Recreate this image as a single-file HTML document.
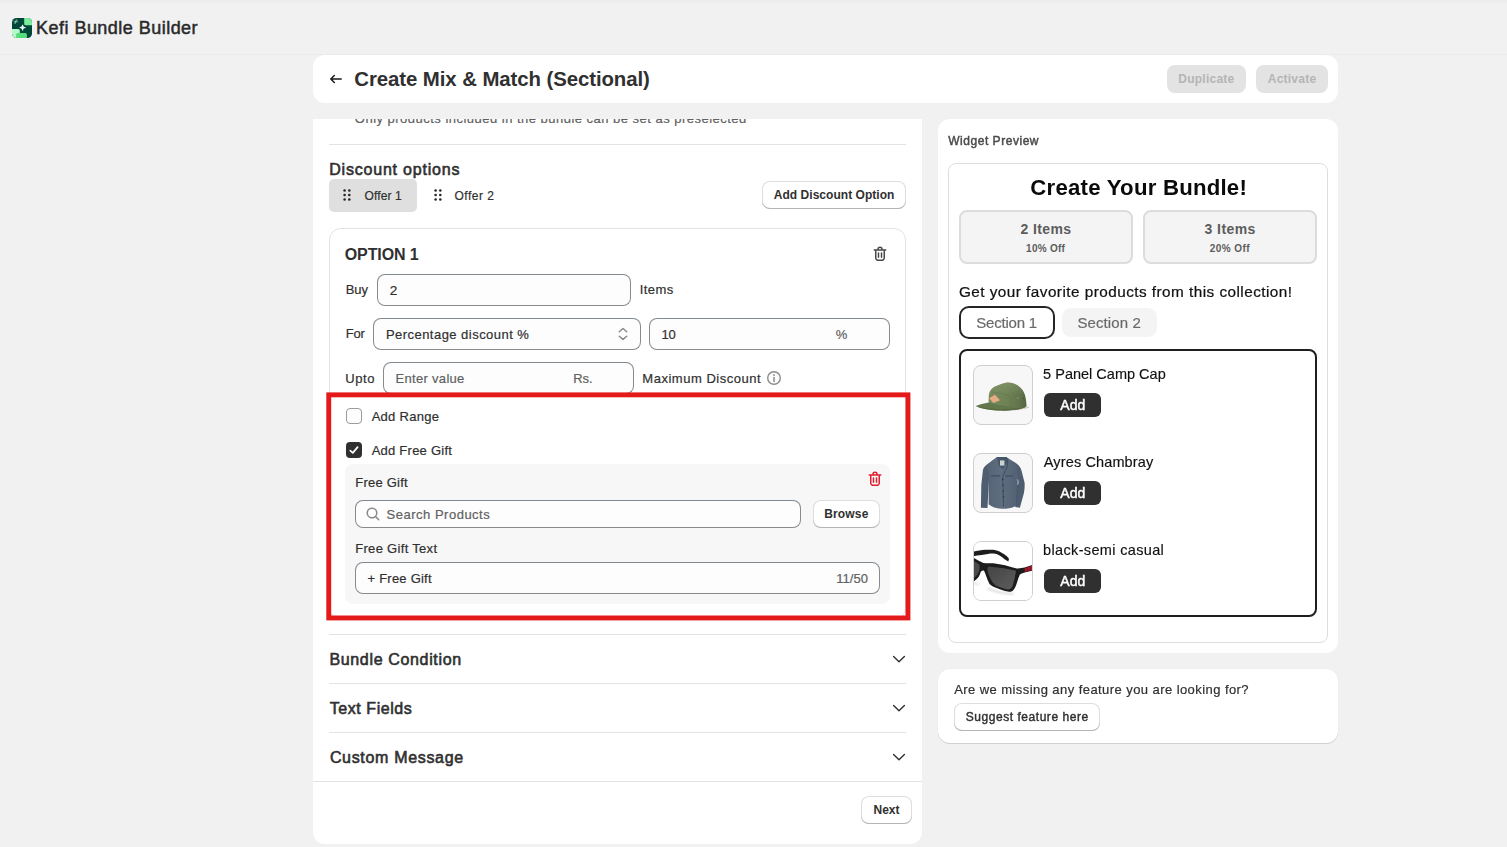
<!DOCTYPE html>
<html lang="en">
<head>
<meta charset="utf-8">
<title>Kefi Bundle Builder</title>
<style>
*{box-sizing:border-box;margin:0;padding:0}
html,body{width:1507px;height:847px;overflow:hidden}
body{background:#f1f1f1;font-family:"Liberation Sans",sans-serif;position:relative;color:#303030}
.a{position:absolute}
.t{position:absolute;white-space:nowrap;z-index:5}
.card{position:absolute;background:#fff}
.inp{position:absolute;background:#fdfdfd;border:1px solid #8a8a8a;border-top-color:#808990;border-radius:8px}
.btn{position:absolute;background:#fff;border-radius:8px;box-shadow:inset 0 -1px 0 0 #b5b5b5,inset 0 0 0 1px rgba(0,0,0,.13)}
.hr{position:absolute;height:1px;background:#e3e3e3}
.dis{position:absolute;background:#e3e3e3;border-radius:8px}
svg{position:absolute;display:block;overflow:visible}
.pimg{position:absolute;width:60px;height:60px;border:1px solid #cfcfcf;border-radius:8px;background:#f7f7f7;overflow:hidden}
.pimg svg{left:-1px;top:-1px}
.addb{position:absolute;background:#303030;border-radius:6px}
</style>
</head>
<body>
<!-- top shade + header -->
<div class="a" style="left:0;top:0;width:1507px;height:4px;background:linear-gradient(#eaeaea,#f1f1f1)"></div>
<div class="a" style="left:0;top:54px;width:1507px;height:1px;background:#ebebeb"></div>

<!-- logo -->
<svg style="left:12px;top:18px" width="20" height="20" viewBox="0 0 20 20">
  <defs><clipPath id="lg"><rect width="20" height="20" rx="4.4"/></clipPath></defs>
  <g clip-path="url(#lg)">
    <rect width="20" height="20" fill="#00473a"/>
    <path d="M12.2 0H20V7.3H13.8A1.6 1.6 0 0 1 12.2 5.7Z" fill="#7bed9c"/>
    <path d="M0 10.9H6.2A1.6 1.6 0 0 1 7.8 12.5V20H0Z" fill="#b5f8c8"/>
    <path d="M4.1 20V16.5A1.6 1.6 0 0 1 5.7 14.9H13.3A1.6 1.6 0 0 1 14.9 16.5V20Z" fill="#55dc7b"/>
    <path d="M10.6 6.9C10.8 8.6 11.6 9.4 13.4 9.6C11.6 9.8 10.8 10.6 10.6 12.4C10.4 10.6 9.6 9.8 7.8 9.6C9.6 9.4 10.4 8.6 10.6 6.9Z" fill="#fff" stroke="#fff" stroke-width=".9" stroke-linejoin="round"/>
    <path d="M4.3 1.6L3.4 5.6M1.9 3.2L5.9 4M2.3 5.2L5.3 2.1" stroke="#b9e3cd" stroke-width=".6" stroke-linecap="round"/>
  </g>
</svg>

<!-- title card -->
<div class="card" style="left:313px;top:55px;width:1025px;height:48px;border-radius:12px"></div>
<svg style="left:328px;top:72px" width="16" height="14" viewBox="0 0 16 14"><path d="M13.2 7H2.9M6.3 3.5L2.8 7l3.5 3.5" fill="none" stroke="#1a1a1a" stroke-width="1.5" stroke-linecap="round" stroke-linejoin="round"/></svg>
<div class="dis" style="left:1167px;top:65px;width:79px;height:28px"></div>
<div class="dis" style="left:1256px;top:65px;width:72px;height:28px"></div>

<!-- main left card -->
<div class="card" style="left:313px;top:119px;width:609px;height:725px;border-radius:0 0 12px 12px;overflow:hidden">
</div>
<div class="hr" style="left:329px;top:144px;width:577px"></div>

<!-- offer tabs -->
<div class="a" style="left:329px;top:179px;width:88px;height:33px;background:#dfdfdf;border-radius:5px"></div>
<svg style="left:342px;top:188px" width="10" height="14" viewBox="0 0 10 14"><g fill="#262626"><circle cx="2.6" cy="2.5" r="1.28"/><circle cx="7.3" cy="2.5" r="1.28"/><circle cx="2.6" cy="7" r="1.28"/><circle cx="7.3" cy="7" r="1.28"/><circle cx="2.6" cy="11.5" r="1.28"/><circle cx="7.3" cy="11.5" r="1.28"/></g></svg>
<svg style="left:433px;top:188px" width="10" height="14" viewBox="0 0 10 14"><g fill="#262626"><circle cx="2.6" cy="2.5" r="1.28"/><circle cx="7.3" cy="2.5" r="1.28"/><circle cx="2.6" cy="7" r="1.28"/><circle cx="7.3" cy="7" r="1.28"/><circle cx="2.6" cy="11.5" r="1.28"/><circle cx="7.3" cy="11.5" r="1.28"/></g></svg>
<div class="btn" style="left:762px;top:181px;width:144px;height:28px"></div>

<!-- option card -->
<div class="a" style="left:329px;top:228px;width:577px;height:392px;border:1px solid #e3e3e3;border-radius:12px;background:#fff"></div>
<svg style="left:870px;top:244px" width="20" height="20" viewBox="0 0 20 20" fill="#4a4a4a"><path d="M11.5 8.25a.75.75 0 0 1 .75.75v4.25a.75.75 0 0 1-1.5 0v-4.25a.75.75 0 0 1 .75-.75Z"/><path d="M9.25 9a.75.75 0 0 0-1.5 0v4.25a.75.75 0 0 0 1.5 0v-4.25Z"/><path fill-rule="evenodd" d="M7.25 5.25a2.75 2.75 0 0 1 5.5 0h3a.75.75 0 0 1 0 1.5h-.75v5.45c0 1.68 0 2.52-.327 3.162a3 3 0 0 1-1.311 1.311c-.642.327-1.482.327-3.162.327h-.4c-1.68 0-2.52 0-3.162-.327a3 3 0 0 1-1.311-1.311c-.327-.642-.327-1.482-.327-3.162v-5.45h-.75a.75.75 0 0 1 0-1.5h3Zm1.5 0a1.25 1.25 0 1 1 2.5 0h-2.5Zm-2.25 1.5h7v5.45c0 .865-.001 1.423-.036 1.848-.033.408-.09.559-.128.633a1.5 1.5 0 0 1-.655.655c-.074.038-.225.095-.633.128-.425.035-.983.036-1.848.036h-.4c-.865 0-1.423-.001-1.848-.036-.408-.033-.559-.09-.633-.128a1.5 1.5 0 0 1-.656-.655c-.037-.074-.094-.225-.127-.633-.035-.425-.036-.983-.036-1.848v-5.45Z"/></svg>

<!-- row: buy -->
<div class="inp" style="left:377px;top:274px;width:254px;height:32px"></div>
<!-- row: for -->
<div class="inp" style="left:373px;top:318px;width:268px;height:32px"></div>
<svg style="left:613px;top:324px" width="20" height="20" viewBox="0 0 20 20"><path d="M6.3 7.7L10 4.5l3.7 3.2M6.3 12.2L10 15.4l3.7-3.2" fill="none" stroke="#8a8a8a" stroke-width="1.5" stroke-linecap="round" stroke-linejoin="round"/></svg>
<div class="inp" style="left:649px;top:318px;width:241px;height:32px"></div>
<!-- row: upto -->
<div class="inp" style="left:383px;top:362px;width:251px;height:32px"></div>
<svg style="left:764px;top:368px" width="20" height="20" viewBox="0 0 20 20"><circle cx="10" cy="10" r="6.3" fill="none" stroke="#8a8a8a" stroke-width="1.4"/><circle cx="10" cy="7" r=".95" fill="#8a8a8a"/><path d="M10 9.6v3.9" stroke="#8a8a8a" stroke-width="1.5" stroke-linecap="round"/></svg>

<!-- checkboxes -->
<div class="a" style="left:346px;top:408px;width:16px;height:16px;border:1px solid #9c9c9c;border-radius:4px;background:#fdfdfd"></div>
<div class="a" style="left:346px;top:442px;width:16px;height:16px;border-radius:4px;background:#303030"></div>
<svg style="left:346px;top:442px" width="16" height="16" viewBox="0 0 16 16"><path d="M4.3 8.6l2.5 2.3 4.8-5.8" fill="none" stroke="#fff" stroke-width="1.7" stroke-linecap="round" stroke-linejoin="round"/></svg>

<!-- free gift grey box -->
<div class="a" style="left:345px;top:463.5px;width:545px;height:140.5px;background:#f7f7f7;border-radius:8px"></div>
<svg style="left:865px;top:469px" width="20" height="20" viewBox="0 0 20 20" fill="#e0202e"><path d="M11.5 8.25a.75.75 0 0 1 .75.75v4.25a.75.75 0 0 1-1.5 0v-4.25a.75.75 0 0 1 .75-.75Z"/><path d="M9.25 9a.75.75 0 0 0-1.5 0v4.25a.75.75 0 0 0 1.5 0v-4.25Z"/><path fill-rule="evenodd" d="M7.25 5.25a2.75 2.75 0 0 1 5.5 0h3a.75.75 0 0 1 0 1.5h-.75v5.45c0 1.68 0 2.52-.327 3.162a3 3 0 0 1-1.311 1.311c-.642.327-1.482.327-3.162.327h-.4c-1.68 0-2.52 0-3.162-.327a3 3 0 0 1-1.311-1.311c-.327-.642-.327-1.482-.327-3.162v-5.45h-.75a.75.75 0 0 1 0-1.5h3Zm1.5 0a1.25 1.25 0 1 1 2.5 0h-2.5Zm-2.25 1.5h7v5.45c0 .865-.001 1.423-.036 1.848-.033.408-.09.559-.128.633a1.5 1.5 0 0 1-.655.655c-.074.038-.225.095-.633.128-.425.035-.983.036-1.848.036h-.4c-.865 0-1.423-.001-1.848-.036-.408-.033-.559-.09-.633-.128a1.5 1.5 0 0 1-.656-.655c-.037-.074-.094-.225-.127-.633-.035-.425-.036-.983-.036-1.848v-5.45Z"/></svg>
<div class="inp" style="left:355px;top:500px;width:446px;height:28px"></div>
<svg style="left:363px;top:504px" width="20" height="20" viewBox="0 0 20 20"><path fill="#8a8a8a" fill-rule="evenodd" d="M12.323 13.383a5.5 5.5 0 1 1 1.06-1.06l2.897 2.897a.75.75 0 1 1-1.06 1.06l-2.897-2.897Zm.677-4.383a4 4 0 1 1-8 0 4 4 0 0 1 8 0Z"/></svg>
<div class="btn" style="left:813px;top:500px;width:67px;height:28px"></div>
<div class="inp" style="left:355px;top:562px;width:525px;height:32px"></div>

<!-- red highlight -->
<svg style="left:0;top:0;z-index:8" width="1507" height="847" viewBox="0 0 1507 847"><rect x="328.75" y="394.85" width="579.2" height="223.1" fill="none" stroke="#e41a1a" stroke-width="4.9"/></svg>

<!-- accordions -->
<div class="hr" style="left:329px;top:634px;width:577px"></div>
<div class="hr" style="left:329px;top:683px;width:577px"></div>
<div class="hr" style="left:329px;top:732px;width:577px"></div>
<div class="hr" style="left:313px;top:781px;width:609px"></div>
<svg style="left:892px;top:654px" width="14" height="10" viewBox="0 0 14 10"><path d="M1.6 2.6L7 7.8l5.4-5.2" fill="none" stroke="#303030" stroke-width="1.4" stroke-linecap="round" stroke-linejoin="round"/></svg>
<svg style="left:892px;top:703px" width="14" height="10" viewBox="0 0 14 10"><path d="M1.6 2.6L7 7.8l5.4-5.2" fill="none" stroke="#303030" stroke-width="1.4" stroke-linecap="round" stroke-linejoin="round"/></svg>
<svg style="left:892px;top:752px" width="14" height="10" viewBox="0 0 14 10"><path d="M1.6 2.6L7 7.8l5.4-5.2" fill="none" stroke="#303030" stroke-width="1.4" stroke-linecap="round" stroke-linejoin="round"/></svg>
<div class="btn" style="left:861px;top:796px;width:51px;height:28px"></div>

<!-- preview card -->
<div class="card" style="left:938px;top:119px;width:400px;height:534px;border-radius:12px"></div>
<div class="a" style="left:948px;top:163px;width:380px;height:480px;border:1px solid #dedede;border-radius:8px;background:#fff"></div>
<div class="a" style="left:959px;top:210px;width:174px;height:54px;border:2px solid #dcdcdc;border-radius:8px;background:#f4f4f4"></div>
<div class="a" style="left:1143px;top:210px;width:174px;height:54px;border:2px solid #dcdcdc;border-radius:8px;background:#f4f4f4"></div>
<div class="a" style="left:959px;top:306px;width:96px;height:33px;border:2px solid #262626;border-radius:10px;background:#fff"></div>
<div class="a" style="left:1062px;top:308px;width:95px;height:29px;border-radius:9px;background:#f4f4f4"></div>
<div class="a" style="left:959px;top:349px;width:358px;height:267.5px;border:2px solid #1f1f1f;border-radius:8px;background:#fff"></div>

<!-- product images -->
<div class="pimg" style="left:973px;top:365px"><svg width="60" height="60" viewBox="0 0 60 60"><defs><linearGradient id="cg" x1="0" y1="0" x2="1" y2="0"><stop offset="0" stop-color="#788b5e"/><stop offset=".5" stop-color="#6e8256"/><stop offset=".8" stop-color="#62754b"/><stop offset="1" stop-color="#54663f"/></linearGradient><linearGradient id="cg2" x1="0" y1="0" x2="0" y2="1"><stop offset="0" stop-color="#869a6c" stop-opacity=".55"/><stop offset=".5" stop-color="#869a6c" stop-opacity="0"/></linearGradient><filter id="b1"><feGaussianBlur stdDeviation=".4"/></filter></defs>
<g filter="url(#b1)">
<path d="M30 45.6 C40 45.4 50 44 56 42.2" stroke="#a08a86" stroke-width=".7" fill="none" opacity=".7"/>
<path d="M15.7 38 C15.5 33 15.8 29.5 16.4 27.5 C17.5 24.5 19.5 22.6 22 21.4 C26 19.6 31 17.6 34.6 17.4 C38.5 17.4 42 18.6 44.5 20.2 C48 22.6 50.5 25.5 51.8 29.5 C53 33.5 53.5 37.5 53.5 41.6 C46 44.2 28 44.4 15.7 41Z" fill="url(#cg)"/>
<path d="M15.7 38 C15.5 33 15.8 29.5 16.4 27.5 C17.5 24.5 19.5 22.6 22 21.4 C26 19.6 31 17.6 34.6 17.4 C38.5 17.4 42 18.6 44.5 20.2 C48 22.6 50.5 25.5 51.8 29.5 C53 33.5 53.5 37.5 53.5 41.6 C46 44.2 28 44.4 15.7 41Z" fill="url(#cg2)"/>
<path d="M18 27 C24 27.6 31 28.6 36 30.6 C38 34 38.6 39 37.6 43.6" fill="none" stroke="#5c6f46" stroke-width=".6" opacity=".75"/>
<path d="M2.8 41 C6 39.8 11 38.4 15.7 37.6 C20 38.6 28 40.6 36 41.4 C42 42 48 42 53.6 41.4 C52 43 46 44.4 40 45 C34 45.6 27 45.6 22 45.2 C14 44.6 7 43 2.8 41Z" fill="#63774d"/>
<path d="M2.8 41 C8 42.6 16 43.6 24 44 C32 44.4 42 43.6 53.6 41.4 C50 44 38 46 28 45.6 C18 45.3 8 44 2.8 41Z" fill="#586b43"/>
<path d="M16.1 33.2 L21.9 29.7 L27 35.2 L20.4 37.9Z" fill="#e6ab82"/>
<circle cx="44.9" cy="32.9" r=".7" fill="#9aa593"/><circle cx="50.4" cy="33.2" r=".6" fill="#3f4f2f"/>
</g></svg></div>
<div class="pimg" style="left:973px;top:453px"><svg width="60" height="60" viewBox="0 0 60 60"><defs><filter id="b2"><feGaussianBlur stdDeviation=".4"/></filter><linearGradient id="sg" x1="0" y1="0" x2="1" y2="0"><stop offset="0" stop-color="#556374"/><stop offset=".45" stop-color="#5f6d80"/><stop offset="1" stop-color="#536173"/></linearGradient></defs>
<g filter="url(#b2)">
<path d="M22.5 5.6 L13.8 11.8 C11.5 13.5 10.3 15 9.9 17.3 L8.3 32 L7.9 54.7 L14.5 55.1 L16.1 24Z" fill="#4f5d70"/>
<path d="M34 5.2 L43 10.2 C46 12 47.6 14.5 48.4 17.3 L51.6 29.7 C51.8 34 51.4 37.5 50.8 40.6 L46.9 54.7 L42.2 54 L44 28Z" fill="#4f5d70"/>
<path d="M23.9 4 L33.2 4 L43 10.2 L45.2 28 L42.6 53 C38 55.6 32 56 28.2 55.8 C23 55.6 19 54 16.1 51.6 L16.1 22.7 L13.8 11.8Z" fill="url(#sg)"/>
<path d="M16.1 22.7 L16.1 51.6" stroke="#46556a" stroke-width=".8"/><path d="M45.2 28 L42.8 53" stroke="#46556a" stroke-width=".8"/>
<path d="M23.9 4 L33.2 4 L34.2 9 L30 16 L26 13 Z" fill="#45546a"/>
<path d="M27 7.4h4.4v5.2H27z" fill="#ccd3cf"/>
<path d="M33.4 4.4 C35.2 8 35 11 33.6 14.9 C32 19 30 22 29.7 25 L30.5 53.4" fill="none" stroke="#364355" stroke-width=".75"/>
<path d="M18 21.9h9.2v1.9H18zM32.5 21.9h7.6v1.9h-7.6z" fill="#44546a"/>
<path d="M18.6 23.8h8v7.8h-8zM33 23.8h6.6v7.6H33z" fill="#5a6a80" opacity=".5"/>
<path d="M44.2 26.6 C45.4 27.4 45.4 30 44.6 31.6" stroke="#c5cbd2" stroke-width="1" fill="none"/>
<circle cx="29.8" cy="26.3" r=".6" fill="#1f2730"/><circle cx="30.1" cy="32.1" r=".6" fill="#1f2730"/><circle cx="30.3" cy="38" r=".6" fill="#1f2730"/><circle cx="30.6" cy="43.8" r=".6" fill="#1f2730"/>
</g></svg></div>
<div class="pimg" style="left:973px;top:541px;background:#fff"><svg width="60" height="60" viewBox="0 0 60 60"><defs><filter id="b3"><feGaussianBlur stdDeviation=".4"/></filter><filter id="b4"><feGaussianBlur stdDeviation=".8"/></filter><linearGradient id="lg2" x1="0" y1="0" x2="1" y2="1"><stop offset="0" stop-color="#454545"/><stop offset="1" stop-color="#5c5c5c"/></linearGradient></defs>
<rect width="60" height="60" fill="#fff"/>
<g filter="url(#b4)"><path d="M15 47.7 C22 50.6 31 52.6 40.6 53.1" stroke="#c9c9c9" stroke-width="1.3" fill="none"/><path d="M0 41.8 C2 42.6 4 43.2 6 43.4" stroke="#cfcfcf" stroke-width="1.2" fill="none"/></g>
<g filter="url(#b3)">
<path d="M0 10.8 C4 9.6 8.5 8.9 12.6 8.7 L20.4 8.7 C23.5 9 26 10.2 28.2 11.4 C30.5 12.6 32.2 13.8 33.6 14.9 C35 16.2 35.8 17.2 36 18.2 L35.2 20.6 C34 19.8 32.6 19 31.3 18 C29.6 16.6 28.2 15.4 26.6 14.5 C24.6 13.4 22.6 12.8 20.4 12.6 C18.6 12.5 16.6 12.7 14.9 13 L8.7 14.1 C5.6 14.5 2.6 14.8 0 15.2Z" fill="#1d1d1d"/>
<path d="M0 16.4 C3.6 18.4 7 20.4 10.3 21.9 C13.6 22.4 17 22.2 20.4 22.3 C24.4 22.8 28.4 23.5 32.1 24.3 C36 25.3 40 26.6 43.8 27.4 C46.5 27.6 49 27.2 51.6 26.6 L60 23.7 L60 29.6 L50.8 31.7 C49.2 32.2 48 32.8 46.9 33.6 C46.2 34.8 45.8 36.2 45.3 37.5 L43 44.5 C42.3 46.4 41.4 48 40.3 49.2 C39 50.4 37.6 50.9 36 50.8 C33.4 50.4 30.8 49.7 28.2 48.8 L20.4 45.7 C19 45.1 17.6 44.2 16.5 43 C15 40.2 13.8 37 12.6 33.6 C12.2 32.2 11.6 30.8 11 29.7 C10.2 29.4 9 29.8 7.9 30.5 C7.4 32.4 6.6 34.3 5.6 36 C4.2 37.8 2.2 39.4 0 40.8Z" fill="#1b1b1b"/>
<path d="M15.3 25.4 C24 26 34 27.6 43 29.7 C42.2 35 41 40.4 39.5 45.3 C38.6 47.4 36.6 48.6 34.4 48.4 C30.4 47.6 26.4 46.2 22.7 44.5 C20.4 42.6 18.6 40.2 17.3 37.5 C16 34.8 15 32.2 14.5 29.7 C14.3 28 14.5 26.4 15.3 25.4Z" fill="url(#lg2)"/>
<path d="M0 19.6 C2.4 20.8 4.6 22.2 6.4 23.8 C6.8 26 6.6 28.4 6 30.6 C5 33 3 35.6 0 37.6Z" fill="#4b4b4b"/>
<path d="M51.6 27.2 L59.4 24.4 L59.4 29 L52 30.9Z" fill="#a8142d"/><path d="M54.2 26 L54.5 30.4M56.8 25.2 L57.1 29.7" stroke="#3a1218" stroke-width=".5"/>
</g></svg></div>
<div class="addb" style="left:1044px;top:393px;width:57px;height:24px"></div>
<div class="addb" style="left:1044px;top:481px;width:57px;height:24px"></div>
<div class="addb" style="left:1044px;top:569px;width:57px;height:24px"></div>

<!-- feedback card -->
<div class="card" style="left:938px;top:669px;width:400px;height:74px;border-radius:12px;box-shadow:0 1px 0 rgba(0,0,0,.12),0 0 2px rgba(0,0,0,.05)"></div>
<div class="btn" style="left:954px;top:703px;width:146px;height:28px"></div>

<div class="t" id="kefi" style="left:36px;top:18.00px;font-size:18px;line-height:20px;font-weight:400;color:#2a2a2a;letter-spacing:0.469px;-webkit-text-stroke:0.5px #2a2a2a;"><span style="position:relative;left:0.06px">Kefi Bundle Builder</span></div>
<div class="t" id="title" style="left:354px;top:68.00px;font-size:20.4px;line-height:22px;font-weight:700;color:#303030;letter-spacing:-0.085px;"><span style="position:relative;left:0.33px">Create Mix &amp; Match (Sectional)</span></div>
<div class="t" id="disc" style="left:329px;top:161.00px;font-size:16px;line-height:17px;font-weight:400;color:#303030;letter-spacing:0.795px;-webkit-text-stroke:0.6px #303030;"><span style="position:relative;left:0.23px">Discount options</span></div>
<div class="t" id="offer1" style="left:364px;top:189.00px;font-size:12px;line-height:14px;font-weight:400;color:#303030;letter-spacing:0.144px;-webkit-text-stroke:0.2px #303030;"><span style="position:relative;left:0.48px">Offer 1</span></div>
<div class="t" id="offer2" style="left:454px;top:189.00px;font-size:12px;line-height:14px;font-weight:400;color:#303030;letter-spacing:0.497px;-webkit-text-stroke:0.2px #303030;"><span style="position:relative;left:0.48px">Offer 2</span></div>
<div class="t" id="addopt" style="left:773px;top:188.00px;font-size:12px;line-height:14px;font-weight:700;color:#303030;letter-spacing:0.032px;"><span style="position:relative;left:0.82px">Add Discount Option</span></div>
<div class="t" id="option1" style="left:344px;top:246.00px;font-size:16px;line-height:17px;font-weight:700;color:#303030;letter-spacing:-0.102px;"><span style="position:relative;left:0.76px">OPTION 1</span></div>
<div class="t" id="buy" style="left:345px;top:282.00px;font-size:13px;line-height:15px;font-weight:400;color:#303030;letter-spacing:0.049px;-webkit-text-stroke:0.2px #303030;"><span style="position:relative;left:0.64px">Buy</span></div>
<div class="t" id="items" style="left:639px;top:282.00px;font-size:13px;line-height:15px;font-weight:400;color:#303030;letter-spacing:0.475px;-webkit-text-stroke:0.2px #303030;"><span style="position:relative;left:0.70px">Items</span></div>
<div class="t" id="two" style="left:389px;top:283.00px;font-size:13.6px;line-height:15px;font-weight:400;color:#303030;-webkit-text-stroke:0.2px #303030;"><span style="position:relative;left:0.79px">2</span></div>
<div class="t" id="for" style="left:345px;top:326.00px;font-size:13px;line-height:15px;font-weight:400;color:#303030;letter-spacing:-0.213px;-webkit-text-stroke:0.2px #303030;"><span style="position:relative;left:0.72px">For</span></div>
<div class="t" id="pct" style="left:385px;top:327.00px;font-size:13px;line-height:15px;font-weight:400;color:#303030;letter-spacing:0.467px;-webkit-text-stroke:0.2px #303030;"><span style="position:relative;left:0.88px">Percentage discount %</span></div>
<div class="t" id="ten" style="left:661px;top:327.00px;font-size:13px;line-height:15px;font-weight:400;color:#303030;-webkit-text-stroke:0.2px #303030;"><span style="position:relative;left:0.40px">10</span></div>
<div class="t" id="pctsym" style="left:835px;top:327.00px;font-size:13px;line-height:15px;font-weight:400;color:#616161;-webkit-text-stroke:0.2px #616161;"><span style="position:relative;left:0.79px">%</span></div>
<div class="t" id="upto" style="left:345px;top:371.00px;font-size:13px;line-height:15px;font-weight:400;color:#303030;letter-spacing:0.588px;-webkit-text-stroke:0.2px #303030;"><span style="position:relative;left:0.22px">Upto</span></div>
<div class="t" id="enter" style="left:395px;top:371.00px;font-size:13px;line-height:15px;font-weight:400;color:#616161;letter-spacing:0.307px;-webkit-text-stroke:0.2px #616161;"><span style="position:relative;left:0.52px">Enter value</span></div>
<div class="t" id="rs" style="left:573px;top:371.00px;font-size:13px;line-height:15px;font-weight:400;color:#616161;letter-spacing:-0.112px;-webkit-text-stroke:0.2px #616161;"><span style="position:relative;left:0.23px">Rs.</span></div>
<div class="t" id="maxd" style="left:642px;top:371.00px;font-size:13px;line-height:15px;font-weight:400;color:#303030;letter-spacing:0.525px;-webkit-text-stroke:0.2px #303030;"><span style="position:relative;left:0.32px">Maximum Discount</span></div>
<div class="t" id="addrange" style="left:371px;top:409.00px;font-size:13px;line-height:15px;font-weight:400;color:#303030;letter-spacing:0.283px;-webkit-text-stroke:0.2px #303030;"><span style="position:relative;left:0.64px">Add Range</span></div>
<div class="t" id="addgift" style="left:371px;top:443.00px;font-size:13px;line-height:15px;font-weight:400;color:#303030;letter-spacing:0.250px;-webkit-text-stroke:0.2px #303030;"><span style="position:relative;left:0.64px">Add Free Gift</span></div>
<div class="t" id="fg" style="left:355px;top:475.00px;font-size:13px;line-height:15px;font-weight:400;color:#303030;letter-spacing:0.233px;-webkit-text-stroke:0.2px #303030;"><span style="position:relative;left:0.23px">Free Gift</span></div>
<div class="t" id="search" style="left:386px;top:507.00px;font-size:13px;line-height:15px;font-weight:400;color:#616161;letter-spacing:0.505px;-webkit-text-stroke:0.2px #616161;"><span style="position:relative;left:0.57px">Search Products</span></div>
<div class="t" id="browse" style="left:824px;top:507.00px;font-size:12px;line-height:14px;font-weight:700;color:#303030;letter-spacing:0.179px;"><span style="position:relative;left:0.17px">Browse</span></div>
<div class="t" id="fgt" style="left:355px;top:541.00px;font-size:13px;line-height:15px;font-weight:400;color:#303030;letter-spacing:0.307px;-webkit-text-stroke:0.2px #303030;"><span style="position:relative;left:0.23px">Free Gift Text</span></div>
<div class="t" id="plusfg" style="left:367px;top:571.00px;font-size:13px;line-height:15px;font-weight:400;color:#303030;letter-spacing:0.227px;-webkit-text-stroke:0.2px #303030;"><span style="position:relative;left:0.53px">+ Free Gift</span></div>
<div class="t" id="cnt" style="left:836px;top:571.00px;font-size:13px;line-height:15px;font-weight:400;color:#616161;letter-spacing:0.074px;-webkit-text-stroke:0.2px #616161;"><span style="position:relative;left:0.16px">11/50</span></div>
<div class="t" id="bc" style="left:329px;top:651.00px;font-size:16px;line-height:17px;font-weight:400;color:#303030;letter-spacing:0.655px;-webkit-text-stroke:0.6px #303030;"><span style="position:relative;left:0.44px">Bundle Condition</span></div>
<div class="t" id="tf" style="left:329px;top:700.00px;font-size:16px;line-height:17px;font-weight:400;color:#303030;letter-spacing:0.550px;-webkit-text-stroke:0.6px #303030;"><span style="position:relative;left:0.78px">Text Fields</span></div>
<div class="t" id="cm" style="left:329px;top:749.00px;font-size:16px;line-height:17px;font-weight:400;color:#303030;letter-spacing:0.677px;-webkit-text-stroke:0.6px #303030;"><span style="position:relative;left:0.88px">Custom Message</span></div>
<div class="t" id="next" style="left:861.30px;width:50.40px;text-align:center;top:803.00px;font-size:12px;line-height:14px;font-weight:700;color:#303030;"><span style="position:relative;left:0.00px">Next</span></div>
<div class="t" id="dup" style="left:1178px;top:72.00px;font-size:12px;line-height:14px;font-weight:700;color:#b5b5b5;letter-spacing:0.250px;"><span style="position:relative;left:0.24px">Duplicate</span></div>
<div class="t" id="act" style="left:1267px;top:72.00px;font-size:12px;line-height:14px;font-weight:700;color:#b5b5b5;letter-spacing:0.236px;"><span style="position:relative;left:0.76px">Activate</span></div>
<div class="t" id="wp" style="left:948px;top:134.00px;font-size:12px;line-height:14px;font-weight:400;color:#4a4a4a;letter-spacing:0.535px;-webkit-text-stroke:0.45px #4a4a4a;will-change:transform;"><span style="position:relative;left:0.20px">Widget Preview</span></div>
<div class="t" id="cyb" style="left:1030px;top:175.00px;font-size:22.2px;line-height:25px;font-weight:700;color:#0a0a0a;letter-spacing:0.222px;will-change:transform;"><span style="position:relative;left:0.37px">Create Your Bundle!</span></div>
<div class="t" id="i2" style="left:1020px;top:221.00px;font-size:14px;line-height:16px;font-weight:700;color:#5c5c5c;letter-spacing:0.379px;"><span style="position:relative;left:0.59px">2 Items</span></div>
<div class="t" id="o10" style="left:1026px;top:243.00px;font-size:10px;line-height:11px;font-weight:700;color:#5c5c5c;letter-spacing:0.263px;"><span style="position:relative;left:0.08px">10% Off</span></div>
<div class="t" id="i3" style="left:1204px;top:221.00px;font-size:14px;line-height:16px;font-weight:700;color:#5c5c5c;letter-spacing:0.420px;"><span style="position:relative;left:0.60px">3 Items</span></div>
<div class="t" id="o20" style="left:1209px;top:243.00px;font-size:10px;line-height:11px;font-weight:700;color:#5c5c5c;letter-spacing:0.453px;"><span style="position:relative;left:0.71px">20% Off</span></div>
<div class="t" id="getfav" style="left:958px;top:283.00px;font-size:15.3px;line-height:17px;font-weight:400;color:#111;letter-spacing:0.467px;-webkit-text-stroke:0.22px #111;will-change:transform;"><span style="position:relative;left:0.96px">Get your favorite products from this collection!</span></div>
<div class="t" id="sec1" style="left:976px;top:314.00px;font-size:15px;line-height:17px;font-weight:400;color:#6a6a6a;letter-spacing:-0.203px;-webkit-text-stroke:0.2px #6a6a6a;will-change:transform;"><span style="position:relative;left:0.29px">Section 1</span></div>
<div class="t" id="sec2" style="left:1077px;top:314.00px;font-size:15px;line-height:17px;font-weight:400;color:#6a6a6a;letter-spacing:0.111px;-webkit-text-stroke:0.2px #6a6a6a;will-change:transform;"><span style="position:relative;left:0.42px">Section 2</span></div>
<div class="t" id="p1" style="left:1043px;top:366.00px;font-size:14.5px;line-height:16px;font-weight:400;color:#111;letter-spacing:0.007px;-webkit-text-stroke:0.15px #111;will-change:transform;"><span style="position:relative;left:0.12px">5 Panel Camp Cap</span></div>
<div class="t" id="p2" style="left:1043px;top:454.00px;font-size:14.5px;line-height:16px;font-weight:400;color:#111;letter-spacing:0.126px;-webkit-text-stroke:0.15px #111;will-change:transform;"><span style="position:relative;left:0.84px">Ayres Chambray</span></div>
<div class="t" id="p3" style="left:1043px;top:542.00px;font-size:14.5px;line-height:16px;font-weight:400;color:#111;letter-spacing:0.342px;-webkit-text-stroke:0.15px #111;will-change:transform;"><span style="position:relative;left:0.12px">black-semi casual</span></div>
<div class="t" id="add1" style="left:1060px;top:397.00px;font-size:14px;line-height:16px;font-weight:400;color:#fff;letter-spacing:0.108px;-webkit-text-stroke:0.45px #fff;will-change:transform;"><span style="position:relative;left:0.27px">Add</span></div>
<div class="t" id="add2" style="left:1060px;top:485.00px;font-size:14px;line-height:16px;font-weight:400;color:#fff;letter-spacing:0.108px;-webkit-text-stroke:0.45px #fff;will-change:transform;"><span style="position:relative;left:0.27px">Add</span></div>
<div class="t" id="add3" style="left:1060px;top:573.00px;font-size:14px;line-height:16px;font-weight:400;color:#fff;letter-spacing:0.108px;-webkit-text-stroke:0.45px #fff;will-change:transform;"><span style="position:relative;left:0.27px">Add</span></div>
<div class="t" id="arewe" style="left:954px;top:682.00px;font-size:13px;line-height:15px;font-weight:400;color:#303030;letter-spacing:0.432px;-webkit-text-stroke:0.2px #303030;will-change:transform;"><span style="position:relative;left:0.15px">Are we missing any feature you are looking for?</span></div>
<div class="t" id="suggest" style="left:965px;top:710.00px;font-size:12px;line-height:14px;font-weight:400;color:#303030;letter-spacing:0.540px;-webkit-text-stroke:0.4px #303030;will-change:transform;"><span style="position:relative;left:0.77px">Suggest feature here</span></div>
<div class="t" id="onlyp" style="left:354px;top:111.00px;font-size:13px;line-height:15px;font-weight:400;color:#616161;letter-spacing:0.482px;-webkit-text-stroke:0.2px #616161;clip-path:inset(8px 0 0 0);"><span style="position:relative;left:0.85px">Only products included in the bundle can be set as preselected</span></div>
</body>
</html>
